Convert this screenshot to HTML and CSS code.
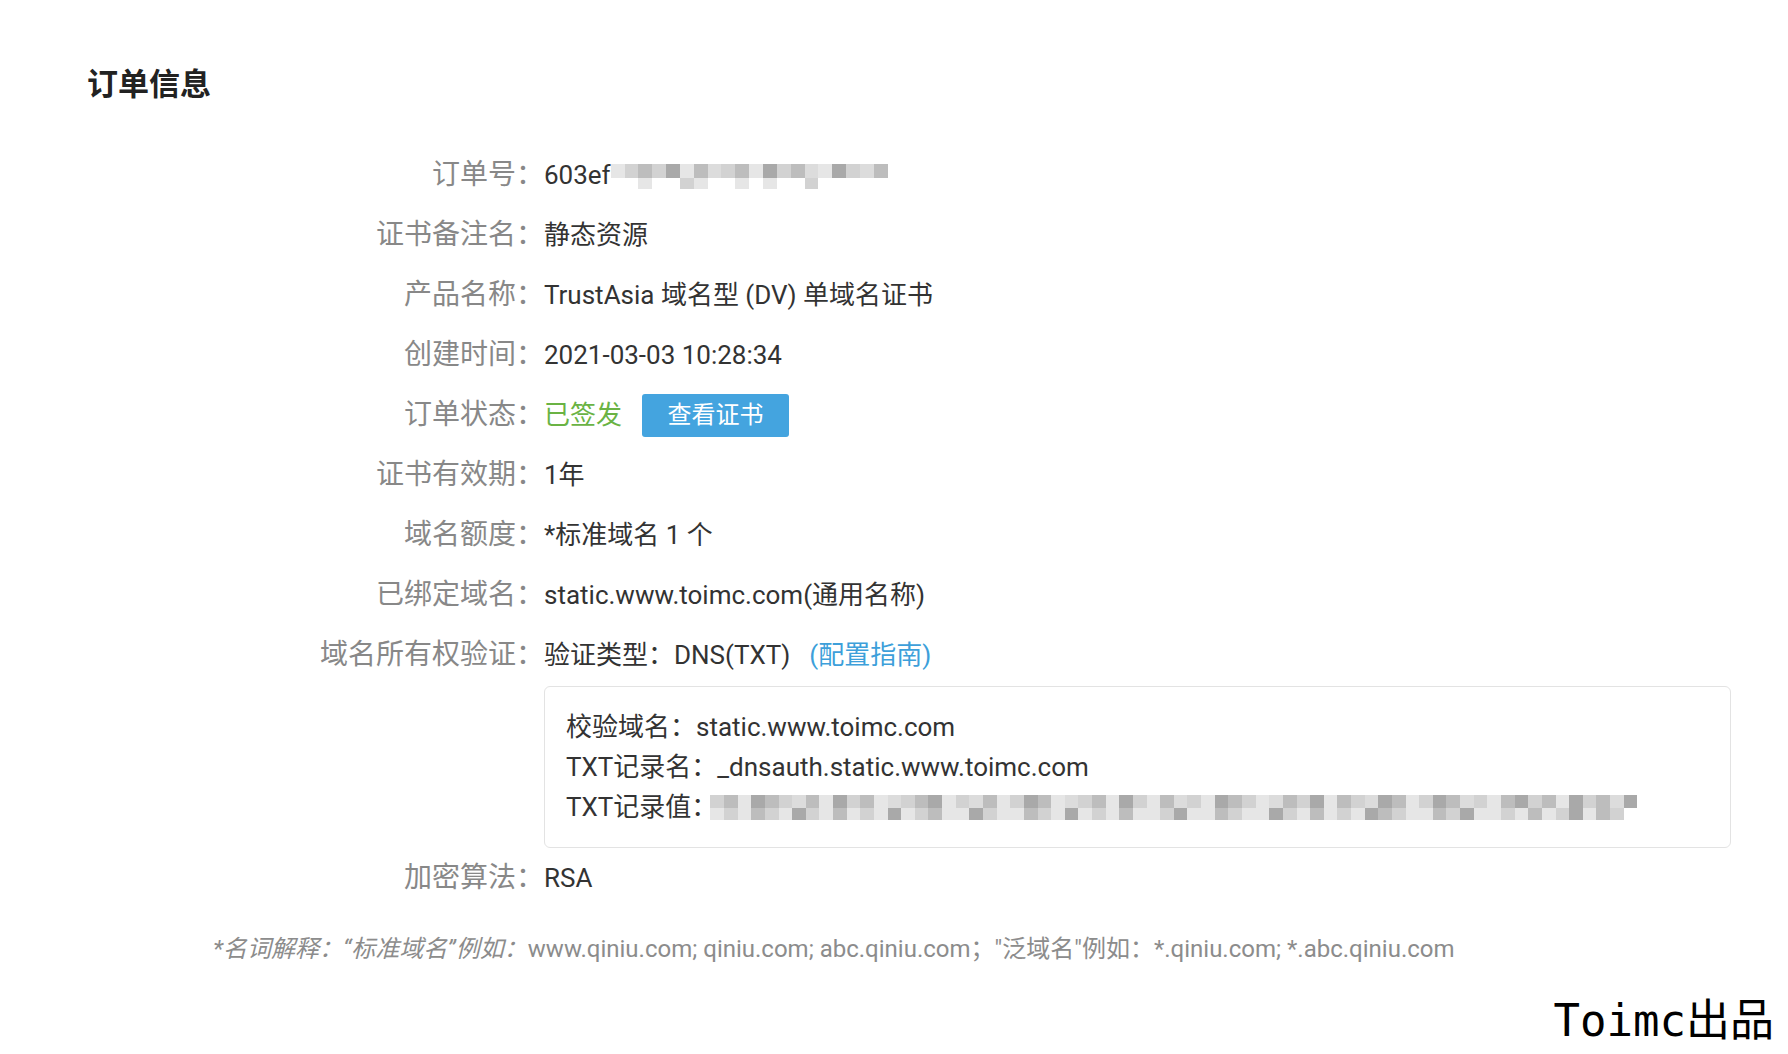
FILE: index.html
```html
<!DOCTYPE html>
<html lang="zh-CN">
<head>
<meta charset="utf-8">
<title>订单信息</title>
<link rel="stylesheet" href="styles.css">
</head>
<body>
<div class="page">
  <h1 class="title">订单信息</h1>
  <div class="info">
    <div class="row"><div class="label">订单号：</div><div class="value">603ef<span class="mosaic mosaic-order"><i class="a"></i><i class="b"></i><i class="c"></i><i class="b"></i><i class="d"></i><i class="a"></i><i class="c"></i><i class="e"></i><i class="b"></i><i class="c"></i><i class="a"></i><i class="d"></i><i class="b"></i><i class="c"></i><i class="e"></i><i class="a"></i><i class="d"></i><i class="b"></i><i class="e"></i><i class="c"></i><i class="w"></i><i class="w"></i><i class="a"></i><i class="w"></i><i class="w"></i><i class="b"></i><i class="a"></i><i class="w"></i><i class="w"></i><i class="a"></i><i class="w"></i><i class="a"></i><i class="w"></i><i class="w"></i><i class="b"></i><i class="w"></i><i class="w"></i><i class="w"></i><i class="w"></i><i class="w"></i></span></div></div>
    <div class="row"><div class="label">证书备注名：</div><div class="value">静态资源</div></div>
    <div class="row"><div class="label">产品名称：</div><div class="value">TrustAsia 域名型 (DV) 单域名证书</div></div>
    <div class="row"><div class="label">创建时间：</div><div class="value">2021-03-03 10:28:34</div></div>
    <div class="row"><div class="label">订单状态：</div><div class="value"><span class="status">已签发</span><button class="btn">查看证书</button></div></div>
    <div class="row"><div class="label">证书有效期：</div><div class="value">1年</div></div>
    <div class="row"><div class="label">域名额度：</div><div class="value">*标准域名 1 个</div></div>
    <div class="row"><div class="label">已绑定域名：</div><div class="value">static.www.toimc.com(通用名称)</div></div>
    <div class="row"><div class="label">域名所有权验证：</div><div class="value">验证类型：DNS(TXT)<a class="link">(配置指南)</a></div></div>
    <div class="row-box">
      <div class="label-empty"></div>
      <div class="box">
        <div class="box-line">校验域名：static.www.toimc.com</div>
        <div class="box-line">TXT记录名：_dnsauth.static.www.toimc.com</div>
        <div class="box-line">TXT记录值：<span class="mosaic mosaic-txt"><i class="b"></i><i class="c"></i><i class="a"></i><i class="d"></i><i class="c"></i><i class="b"></i><i class="e"></i><i class="c"></i><i class="a"></i><i class="d"></i><i class="b"></i><i class="c"></i><i class="a"></i><i class="e"></i><i class="b"></i><i class="c"></i><i class="d"></i><i class="a"></i><i class="b"></i><i class="e"></i><i class="c"></i><i class="a"></i><i class="b"></i><i class="d"></i><i class="c"></i><i class="a"></i><i class="e"></i><i class="b"></i><i class="c"></i><i class="a"></i><i class="d"></i><i class="b"></i><i class="a"></i><i class="c"></i><i class="e"></i><i class="b"></i><i class="a"></i><i class="d"></i><i class="c"></i><i class="b"></i><i class="a"></i><i class="e"></i><i class="c"></i><i class="b"></i><i class="d"></i><i class="a"></i><i class="c"></i><i class="b"></i><i class="e"></i><i class="d"></i><i class="c"></i><i class="a"></i><i class="b"></i><i class="d"></i><i class="c"></i><i class="e"></i><i class="b"></i><i class="a"></i><i class="c"></i><i class="d"></i><i class="b"></i><i class="c"></i><i class="a"></i><i class="d"></i><i class="b"></i><i class="c"></i><i class="e"></i><i class="d"></i>
        <i class="a"></i><i class="b"></i><i class="a"></i><i class="c"></i><i class="b"></i><i class="a"></i><i class="d"></i><i class="b"></i><i class="a"></i><i class="c"></i><i class="a"></i><i class="b"></i><i class="a"></i><i class="d"></i><i class="a"></i><i class="b"></i><i class="c"></i><i class="a"></i><i class="a"></i><i class="d"></i><i class="b"></i><i class="a"></i><i class="a"></i><i class="c"></i><i class="b"></i><i class="a"></i><i class="d"></i><i class="a"></i><i class="b"></i><i class="a"></i><i class="c"></i><i class="a"></i><i class="a"></i><i class="b"></i><i class="d"></i><i class="a"></i><i class="a"></i><i class="c"></i><i class="b"></i><i class="a"></i><i class="a"></i><i class="d"></i><i class="b"></i><i class="a"></i><i class="c"></i><i class="a"></i><i class="b"></i><i class="a"></i><i class="d"></i><i class="c"></i><i class="b"></i><i class="a"></i><i class="a"></i><i class="c"></i><i class="b"></i><i class="d"></i><i class="a"></i><i class="a"></i><i class="b"></i><i class="a"></i><i class="c"></i><i class="a"></i><i class="b"></i><i class="d"></i><i class="a"></i><i class="c"></i><i class="b"></i><i class="w"></i></span></div>
      </div>
    </div>
    <div class="row"><div class="label">加密算法：</div><div class="value">RSA</div></div>
  </div>
  <p class="note"><em>*名词解释：“标准域名”例如：</em>www.qiniu.com; qiniu.com; abc.qiniu.com；"泛域名"例如：*.qiniu.com; *.abc.qiniu.com</p>
</div>
<div class="watermark"><span class="wm-latin">Toimc</span>出品</div>
</body>
</html>
```

FILE: styles.css
```css
html, body {
  margin: 0;
  padding: 0;
  background: #ffffff;
}

body {
  font-family: Roboto, "Noto Sans CJK SC", sans-serif;
  color: #333333;
  width: 1788px;
  height: 1054px;
  position: relative;
  overflow: hidden;
}

.page {
  padding: 65px 0 0 87px;
  width: 1644px;
}

.title {
  margin: 0;
  font-size: 31px;
  line-height: 40px;
  font-weight: 700;
  color: #222222;
}

.info {
  margin-top: 40px;
  display: flex;
  flex-direction: column;
}

.row {
  display: flex;
  height: 60px;
  align-items: center;
}

.label {
  width: 457px;
  flex: none;
  text-align: right;
  font-size: 28px;
  line-height: 60px;
  color: #888888;
  white-space: nowrap;
}

.value {
  flex: 1;
  display: flex;
  align-items: center;
  font-size: 26px;
  line-height: 60px;
  color: #333333;
  white-space: nowrap;
}

.status {
  color: #6ab344;
}

.btn {
  margin-left: 20px;
  height: 43px;
  width: 147px;
  padding: 0;
  border: none;
  border-radius: 3px;
  background: #44a4df;
  color: #ffffff;
  font-family: Roboto, "Noto Sans CJK SC", sans-serif;
  font-size: 24px;
  line-height: 43px;
}

.link {
  margin-left: 19px;
  color: #3d9fda;
}

.row-box {
  display: flex;
  margin-top: 1px;
}

.label-empty {
  width: 457px;
  flex: none;
}

.box {
  flex: 1;
  border: 1px solid #e3e3e3;
  border-radius: 6px;
  padding: 20px 21px 20px 21px;
}

.box-line {
  display: flex;
  align-items: center;
  font-size: 26px;
  line-height: 40px;
  color: #333333;
  white-space: nowrap;
}

.mosaic {
  display: inline-grid;
  grid-auto-flow: row;
  height: 25px;
}

.mosaic i {
  display: block;
}

.mosaic-order {
  grid-template-columns: repeat(20, 1fr);
  grid-template-rows: 14px 11px;
  width: 277px;
  margin-top: 2px;
}

.mosaic-txt {
  grid-template-columns: repeat(68, 1fr);
  grid-template-rows: 13px 12px;
  width: 927px;
  margin-left: -7px;
  border-radius: 10px 0 0 10px;
}

.mosaic .w { background: #ffffff; }
.mosaic .a { background: #e6e6e6; }
.mosaic .b { background: #d2d2d2; }
.mosaic .c { background: #bdbdbd; }
.mosaic .d { background: #a9a9a9; }
.mosaic .e { background: #dcdcdc; }

.note {
  margin: 26px 0 0 126px;
  font-size: 24px;
  line-height: 30px;
  color: #8c8c8c;
  white-space: nowrap;
}

.note em {
  font-style: italic;
}

.watermark {
  position: absolute;
  right: 14px;
  top: 996px;
  font-family: "DejaVu Sans Mono", "Noto Sans CJK SC", monospace;
  font-size: 44px;
  line-height: 50px;
  color: #000000;
}

.wm-latin {
  font-family: "DejaVu Sans Mono", monospace;
}
```
